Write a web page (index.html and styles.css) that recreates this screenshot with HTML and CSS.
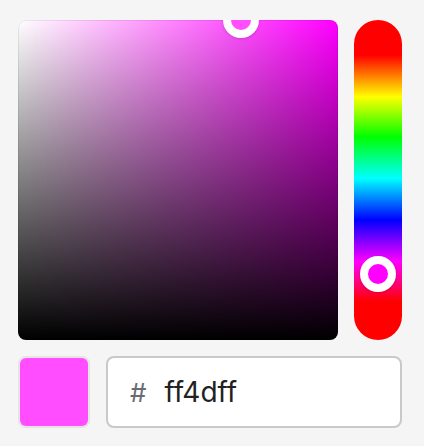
FILE: index.html
```html
<!DOCTYPE html>
<html lang="en">
<head>
    <meta charset="UTF-8">
    <meta name="viewport" content="width=device-width, initial-scale=1.0">
    <title>Color Picker</title>
    <link rel="stylesheet" href="styles.css">
</head>
<body>

    <!-- Picker -->
    <div class="picker">
        <div class="picker-top">
            <div class="saturation">
                <div class="pointer sat-pointer"></div>
            </div>
            <div class="hue">
                <div class="pointer hue-pointer"></div>
            </div>
        </div>

        <!-- Hex input -->
        <div class="picker-bottom">
            <div class="swatch"><span></span></div>
            <label class="hex-field">
                <span class="hash">#</span>
                <input type="text" value="ff4dff" spellcheck="false">
            </label>
        </div>
    </div>

</body>
</html>
```

FILE: styles.css
```css
body {
    font-family: Inter, "Noto Sans", sans-serif;
    margin: 0;
    padding: 0;
    background-color: #f5f5f5;
}
.picker {
    padding: 20px 22px 0 18px;
}
.picker-top {
    display: flex;
    gap: 16px;
}
.saturation {
    position: relative;
    width: 320px;
    height: 320px;
    border-radius: 8px;
    overflow: hidden;
    background:
        linear-gradient(to top, #000, rgba(0, 0, 0, 0)),
        linear-gradient(to right, #fff, rgba(255, 255, 255, 0)),
        #f0f;
    box-shadow: inset 0 0 0 1px rgba(0, 0, 0, 0.08);
}
.hue {
    position: relative;
    width: 48px;
    height: 320px;
    border-radius: 24px;
    background: linear-gradient(to bottom,
        #f00 11%, #ff0 24%, #0f0 36.5%, #0ff 49.5%,
        #00f 62.5%, #f0f 75.5%, #f00 88%);
}
.pointer {
    position: absolute;
    width: 36px;
    height: 36px;
    box-sizing: border-box;
    border: 8px solid #fff;
    border-radius: 50%;
    transform: translate(-50%, -50%);
    box-shadow: 0 1px 3px rgba(0, 0, 0, 0.15);
}
.sat-pointer {
    left: 69.8%;
    top: 0;
    background-color: #ff4dff;
}
.hue-pointer {
    left: 50%;
    top: 79.4%;
    background-color: #f0f;
}
.picker-bottom {
    display: flex;
    gap: 16px;
    margin-top: 16px;
}
.swatch {
    width: 72px;
    height: 72px;
    box-sizing: border-box;
    border: 2px solid #e4e4e4;
    border-radius: 8px;
    display: flex;
}
.swatch span {
    flex: 1;
    background-color: #ff4dff;
    border-radius: 6px;
}
.hex-field {
    display: flex;
    align-items: center;
    width: 296px;
    height: 72px;
    box-sizing: border-box;
    border: 2px solid #c8c9cd;
    border-radius: 8px;
    background-color: white;
    padding-left: 22px;
}
.hash {
    color: #6b6b70;
    font-size: 26px;
    margin-right: 18px;
}
.hex-field input {
    border: none;
    outline: none;
    background: none;
    padding: 0;
    width: 180px;
    font-family: inherit;
    font-size: 28px;
    color: #222;
}
```
